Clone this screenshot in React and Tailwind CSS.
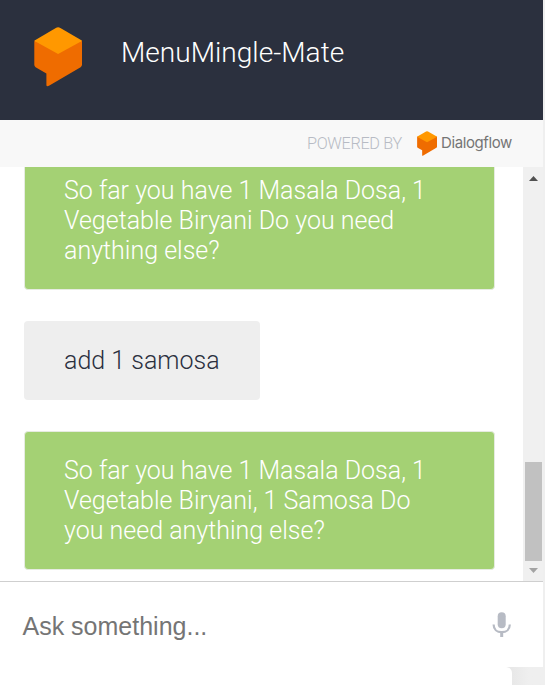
function Cube({ className }) {
  return (
    <svg className={className} viewBox="0 0 48 61" preserveAspectRatio="none">
      <path
        d="M1.5 13.5H46.5Q48 13.5 48 15V38.5Q48 40 46.6 41L15 59.8Q12.4 61 12.4 59V47.2L1.6 41Q0.3 40 0.3 38.5V15Q0.3 13.5 1.5 13.5Z"
        fill="#ef6c00"
      />
      <path
        d="M1 13.4L21.8 1Q24.1 -0.3 26.4 1L47.4 13.4Q48 14 47.4 14.4L24.1 27.4L1 14.4Q0.3 14 1 13.4Z"
        fill="#ff9800"
      />
    </svg>
  );
}

function Bubble({ children, className }) {
  return (
    <div
      className={`shrink-0 rounded-[4px] text-[25px] leading-[30px] font-light ${className}`}
    >
      {children}
    </div>
  );
}

const botBubble = "w-[471px] h-[139px] border border-[#e6ebe1] bg-[#a4d174] pt-[24px] pl-[39px] text-white";

export default function App() {
  return (
    <div className="h-[685px] w-[545px] overflow-hidden bg-[#efefef] font-[Roboto,sans-serif]">
      <div className="flex h-[667px] w-[543px] flex-col bg-white">
        <header className="flex h-[120px] shrink-0 items-start bg-[#2b303e]">
          <Cube className="mt-[27px] ml-[34px] h-[60px] w-[48px]" />
          <h1 className="mt-[37px] ml-[39px] text-[28.1px] leading-[32px] font-light whitespace-nowrap text-white">
            MenuMingle-Mate
          </h1>
        </header>

        <div className="flex h-[47px] shrink-0 items-center bg-[#f8f8f8] pl-[307px]">
          <span className="w-[110px] shrink-0 pt-px text-[16.25px] leading-[20px] font-light tracking-[-0.35px] whitespace-nowrap text-[#b7bbc4]">
            POWERED BY
          </span>
          <Cube className="h-[25px] w-[20px] shrink-0" />
          <span className="-mt-px ml-[4px] font-[Inter,sans-serif] text-[15px] leading-[20px] tracking-[-0.4px] whitespace-nowrap text-[#757575]">
            Dialogflow
          </span>
        </div>

        <div className="flex h-[414px] shrink-0">
          <main className="flex w-[523px] flex-col items-start justify-end gap-[31px] overflow-hidden pb-[11px] pl-[24px]">
            <Bubble className={botBubble}>
              So far you have 1 Masala Dosa, 1<br />
              Vegetable Biryani Do you need
              <br />
              anything else?
            </Bubble>
            <Bubble className="h-[79px] w-[236px] bg-[#eeeeee] pt-[25px] pl-[40px] whitespace-nowrap text-[#2b303e]">
              add 1 samosa
            </Bubble>
            <Bubble className={botBubble}>
              So far you have 1 Masala Dosa, 1<br />
              Vegetable Biryani, 1 Samosa Do
              <br />
              you need anything else?
            </Bubble>
          </main>
          <div className="flex w-[20px] flex-col items-center bg-[#f0f0f0]">
            <svg className="mt-[9px] h-[5px] w-[9px] shrink-0" viewBox="0 0 9 5">
              <path d="M0 5L4.5 0L9 5Z" fill="#505050" />
            </svg>
            <div className="mt-[281px] ml-px h-[99px] w-[17px] shrink-0 bg-[#c1c1c1]" />
            <svg className="mt-[7px] h-[5px] w-[9px] shrink-0" viewBox="0 0 9 5">
              <path d="M0 0L4.5 5L9 0Z" fill="#a3a3a3" />
            </svg>
          </div>
        </div>

        <div className="flex h-[86px] shrink-0 items-start justify-between border-t border-[#cfcfcf] pr-[32px] pl-[22.5px]">
          <span className="mt-[29px] font-['Liberation_Sans',Arial,sans-serif] text-[25px] leading-[30px] text-[#757575]">
            Ask something...
          </span>
          <svg className="mt-[30px] h-[26px] w-[19px]" viewBox="0 0 19 26">
            <rect x="5.7" y="0.3" width="8" height="16" rx="4" fill="#b7bbc4" />
            <path d="M1.6 12.4C1.6 17.3 5 20.2 9.7 20.2S17.8 17.3 17.8 12.4" fill="none" stroke="#b7bbc4" strokeWidth="2.2" />
            <path d="M9.7 20V25" stroke="#b7bbc4" strokeWidth="3" />
          </svg>
        </div>
      </div>
      <div className="flex h-[18px] bg-gradient-to-r from-[#e8e8e8] from-[94%] to-[#efefef] to-[97%]">
        <div className="h-[18px] w-[512px] rounded-tr-[6px] bg-white" />
      </div>
    </div>
  );
}
